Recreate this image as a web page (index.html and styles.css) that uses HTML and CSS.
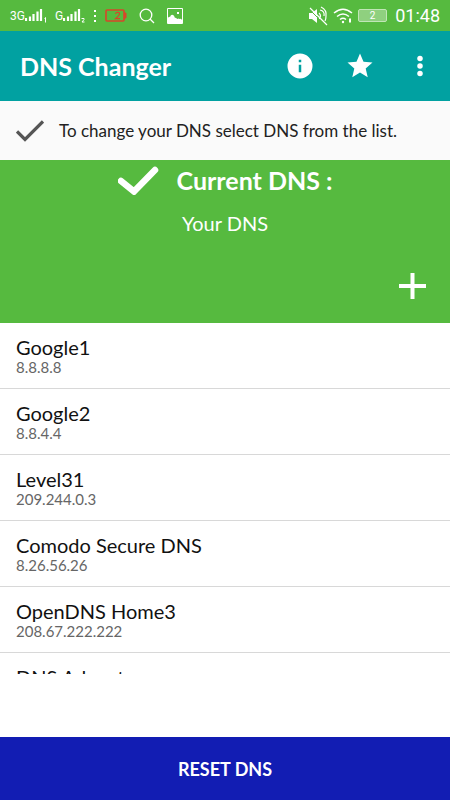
FILE: index.html
```
<!DOCTYPE html>
<html lang="en">
<head>
    <meta charset="UTF-8">
    <meta name="viewport" content="width=device-width, initial-scale=1">
    <title>DNS Changer</title>
    <link rel="stylesheet" href="styles.css">
</head>
<body>
    <div class="status">
        <div class="status-left">
            <div class="signal">
                <span>3G</span>
                <svg width="22" height="14" viewBox="0 0 22 14"><path d="M1 12V9M5 12V7.500M8.500 12V5M12.500 12V2.500M16 12V0" stroke="#fff" stroke-width="2.200"/><path d="M19.500 9.500l1-1v5" stroke="#fff" fill="none"/></svg>
            </div>
            <div class="signal">
                <span>G</span>
                <svg width="22" height="14" viewBox="0 0 22 14"><path d="M1 12V9M5 12V7.500M8.500 12V5M12.500 12V2.500M16 12V0" stroke="#fff" stroke-width="2.200"/><path d="M18.500 9.500h2.500v1L19 13h2.500" stroke="#fff" fill="none"/></svg>
            </div>
            <svg width="4" height="14" viewBox="0 0 4 14"><path d="M1 1h2v2H1zM1 6h2v2H1zM1 11h2v2H1z" fill="#fff"/></svg>
            <svg class="wide" width="22" height="14" viewBox="0 0 22 14"><rect x="1" y="1" width="18" height="11" rx="1" fill="none" stroke="#d8452a" stroke-width="1.600"/><path d="M19 4h2v5h-2" fill="#d8452a" stroke="#d8452a"/><path d="M10.500 5q.3-1.700 2-1.700 2.200 0 2 1.700 0 1-4 4.700h4.500" fill="none" stroke="#d8452a" stroke-width="1.200"/></svg>
            <svg class="wide" width="16" height="16" viewBox="0 0 16 16" fill="none" stroke="#fff" stroke-width="1.300"><circle cx="7" cy="7" r="5.800"/><path d="M11 11l4 4"/></svg>
            <svg width="16" height="16" viewBox="0 0 16 16"><path fill-rule="evenodd" fill="#fff" d="M1 0h14q1 0 1 1v14q0 1-1 1H1q-1 0-1-1V1q0-1 1-1zM1 1v9q1-2 2-1 1-3 3-2 1 0 2 3 1-1 2 1 2-1 2 0 2-1 3 1V1zM10 4h2v2h-2z"/></svg>
        </div>
        <div class="status-right">
            <svg width="20" height="20" viewBox="0 0 20 20"><path d="M1 7h3l5-4v14l-5-4H1z" fill="#fff"/><path d="M11 7q3 3 0 6M12 4q5 1 4 6M13 1q6 3 5 9q0 3-1 5M2 2l17 17" fill="none" stroke="#fff" stroke-width="1.200"/><path d="M1 3l15 15" stroke="#56ba3f"/></svg>
            <svg width="20" height="16" viewBox="0 0 20 16" fill="none" stroke="#fff" stroke-width="1.500"><path d="M1 5q9-7.500 18 0M4 8.500q6-5 12 0M7 11.500q3-2.500 6 0"/><circle cx="10" cy="14" r="1.200" fill="#fff" stroke="none"/><path d="M17 10.500v4" stroke-width="2"/></svg>
            <div class="battery">2</div>
            <span class="clock">01:48</span>
        </div>
    </div>

    <header class="toolbar">
        <h1>DNS Changer</h1>
        <button type="button" aria-label="Info">
            <svg width="30" height="30" viewBox="0 0 24 24"><path d="M12 2a10 10 0 1 0 0 20 10 10 0 0 0 0-20zm1 15h-2v-6h2zm0-8h-2V7h2z"/></svg>
        </button>
        <button type="button" aria-label="Rate">
            <svg width="30" height="30" viewBox="0 0 24 24"><path d="M12 17.270L18.180 21l-1.640-7.030L22 9.240l-7.190-.61L12 2 9.190 8.630 2 9.240l5.460 4.730L5.820 21z"/></svg>
        </button>
        <button type="button" aria-label="More options">
            <svg width="30" height="30" viewBox="0 0 24 24"><circle cx="12" cy="6" r="2.200"/><circle cx="12" cy="12" r="2.200"/><circle cx="12" cy="18" r="2.200"/></svg>
        </button>
    </header>

    <div class="hint">
        <svg width="28" height="22" viewBox="0 0 28 22"><path d="M1 11.500l8 8L27 1.500" fill="none" stroke="#555" stroke-width="3.200"/></svg>
        <p>To change your DNS select DNS from the list.</p>
    </div>

    <section class="current">
        <div class="current-title">
            <svg width="42" height="30" viewBox="0 0 42 30"><path d="M3 16l13 10.500L37 5" fill="none" stroke="#fff" stroke-width="6.500" stroke-linecap="round"/></svg>
            <h2>Current DNS :</h2>
        </div>
        <p>Your DNS</p>
        <button type="button" class="add" aria-label="Add DNS">
            <svg width="28" height="28" viewBox="0 0 28 28"><path d="M14.500 1v26M1 14h27" stroke="#fff" stroke-width="4"/></svg>
        </button>
    </section>

    <ul class="list">
        <li><h3>Google1</h3><p>8.8.8.8</p></li>
        <li><h3>Google2</h3><p>8.8.4.4</p></li>
        <li><h3>Level31</h3><p>209.244.0.3</p></li>
        <li><h3>Comodo Secure DNS</h3><p>8.26.56.26</p></li>
        <li><h3>OpenDNS Home3</h3><p>208.67.222.222</p></li>
        <li><h3>DNS Advantage</h3></li>
    </ul>

    <button type="button" class="reset">RESET DNS</button>
</body>
</html>
```

FILE: styles.css
```
*{
    margin: 0;
    padding: 0;
    box-sizing: border-box;
}

body{
    display: flex;
    flex-direction: column;
    height: 100vh;
    background-color: #fff;
    font-family: Lato, sans-serif;
    overflow: hidden;
}

button{
    border: none;
    background: none;
    font-family: inherit;
    cursor: pointer;
}

svg{
    display: block;
    flex: none;
}

.status{
    display: flex;
    justify-content: space-between;
    align-items: center;
    flex: none;
    height: 31px;
    padding: 0 10px;
    background-color: #56ba3f;
    color: #fff;
    font-family: Roboto, sans-serif;
}

.status-left, .status-right{
    display: flex;
    align-items: center;
}

.status-left{
    gap: 8px;
}

.status-right{
    gap: 5px;
}

.signal{
    display: flex;
    align-items: center;
    font-size: 12px;
}

.wide{
    margin-right: 4px;
}

.battery{
    width: 29px;
    height: 13px;
    border: 1px solid #c0e6b6;
    border-radius: 2px;
    background-color: #8fd07f;
    font-size: 10px;
    line-height: 11px;
    text-align: center;
}

.clock{
    margin-left: 3px;
    font-size: 18px;
}

.toolbar{
    display: flex;
    align-items: center;
    flex: none;
    height: 70px;
    padding-left: 20px;
    background-color: #01a1a1;
    color: #fff;
}

.toolbar h1{
    flex: 1;
    font-size: 25px;
    line-height: 30px;
}

.toolbar button{
    display: flex;
    justify-content: center;
    width: 60px;
}

.toolbar svg{
    fill: #fff;
}

.hint{
    display: flex;
    align-items: center;
    flex: none;
    gap: 15px;
    height: 59px;
    padding: 0 16px;
    background-color: #fafafa;
    color: #222;
    font-size: 17px;
}

.current{
    display: flex;
    flex-direction: column;
    align-items: center;
    flex: none;
    height: 163px;
    padding: 5px 24px 23px;
    background-color: #56ba3f;
    color: #fff;
}

.current-title{
    display: flex;
    align-items: center;
    gap: 17px;
}

.current h2{
    font-size: 25px;
    line-height: 30px;
}

.current p{
    margin-top: 15px;
    font-size: 20px;
    line-height: 26px;
}

.add{
    margin-top: auto;
    align-self: flex-end;
}

.list{
    flex: 1;
    min-height: 0;
    margin-bottom: 63px;
    list-style: none;
    overflow: hidden;
}

.list li{
    height: 66px;
    padding: 12px 16px 0;
    border-bottom: 1px solid #d8d8d8;
}

.list h3{
    color: #111;
    font-size: 20px;
    font-weight: normal;
    line-height: 24px;
}

.list p{
    color: #666;
    font-size: 15px;
    line-height: 17px;
}

.reset{
    flex: none;
    height: 63px;
    background-color: #121db3;
    color: #fff;
    font-size: 18px;
    font-weight: bold;
}
```
